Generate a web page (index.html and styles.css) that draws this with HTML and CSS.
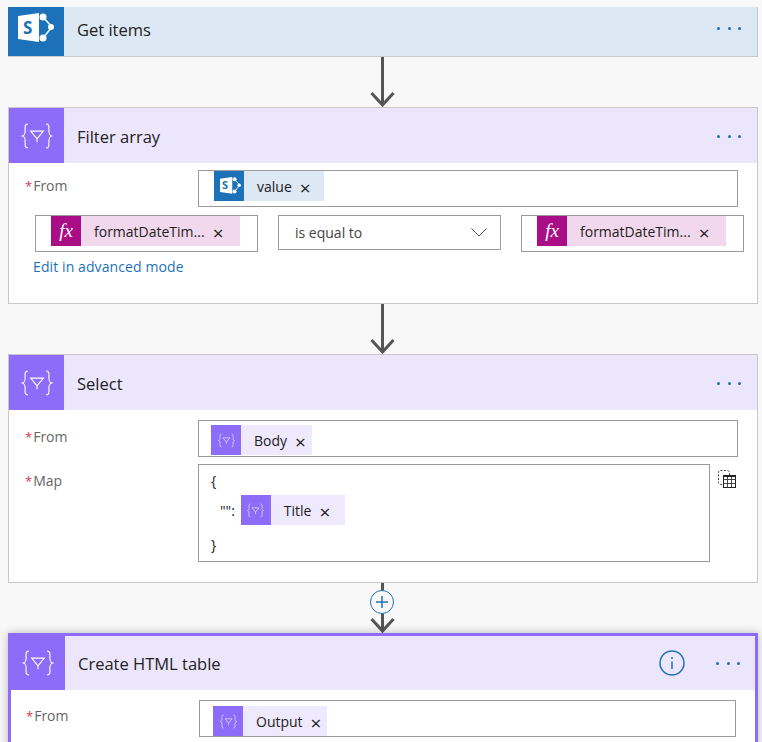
FILE: index.html
```html
<!DOCTYPE html>
<html lang="en">
	<head>
		<title>Flow</title>
		<meta charset="utf-8">
		<link rel="stylesheet" href="styles.css">
	</head>

	<body>
		<svg class="defs" width="0" height="0">
			<symbol id="sp" viewBox="0 0 36 31">
				<path d="M25 4 34 14 25 25" fill="none" stroke="#fff" stroke-width="1.500"/>
				<circle cx="25" cy="4" r="3.500" fill="#fff"/>
				<circle cx="33" cy="14" r="3" fill="#fff"/>
				<circle cx="25" cy="25" r="3.500" fill="#fff"/>
				<polygon points="0,3 21,0 21,29 0,26" fill="#fff"/>
			</symbol>
			<symbol id="filter" viewBox="0 0 30 30">
				<g fill="none" stroke="#fff" stroke-width=".8">
					<path d="M8.500 6.500C6 6.500 6.500 8.500 6.500 11.500 6.500 14 6 14.500 4.500 15 6 15.500 6.500 16 6.500 18.500 6.500 21.500 6 23.500 8.500 23.500"/>
					<path d="M21.500 6.500C24 6.500 23.500 8.500 23.500 11.500 23.500 14 24 14.500 25.500 15 24 15.500 23.500 16 23.500 18.500 23.500 21.500 24 23.500 21.500 23.500"/>
					<path d="M10.500 11.500H19.500L15 17ZM15 17V19.500"/>
				</g>
			</symbol>
		</svg>

		<div class="flow">
			<div class="card card-sp">
				<div class="head head-first">
					<div class="tile tile-blue">
						<svg class="tile-sp" viewBox="0 0 36 31"><use href="#sp"/></svg>
						<span class="tile-s">S</span>
					</div>
					<div class="title">Get items</div>
					<div class="dots"><i></i><i></i><i></i></div>
				</div>
			</div>

			<div class="link-arrow">
				<svg width="50" height="50"><path d="M24.500 0V48M13.500 36 24.500 48 35.500 36" fill="none" stroke="#555" stroke-width="3"/></svg>
			</div>

			<div class="card card-filter">
				<div class="head">
					<div class="tile"><svg class="tile-svg" viewBox="0 0 30 30"><use href="#filter"/></svg></div>
					<div class="title">Filter array</div>
					<div class="dots"><i></i><i></i><i></i></div>
				</div>
				<div class="body body-filter">
					<div class="row">
						<div class="label"><b>*</b>From</div>
						<div class="input input-wide input-top">
							<div class="chip chip-sp">
								<div class="chip-icon chip-icon-blue">
									<svg class="chip-sp-svg" viewBox="0 0 36 31"><use href="#sp"/></svg>
									<span class="chip-s">S</span>
								</div>
								<span class="chip-text">value</span><span class="x">×</span>
							</div>
						</div>
					</div>
					<div class="cond">
						<div class="input input-cond input-top">
							<div class="chip chip-fx">
								<div class="chip-icon chip-icon-fx">fx</div>
								<span class="chip-text">formatDateTim...</span><span class="x">×</span>
							</div>
						</div>
						<div class="input input-cond input-select">
							<span>is equal to</span>
							<svg width="16" height="9"><path d="M.5 .5 8 8 15.500 .5" fill="none" stroke="#555"/></svg>
						</div>
						<div class="input input-cond input-top">
							<div class="chip chip-fx">
								<div class="chip-icon chip-icon-fx">fx</div>
								<span class="chip-text">formatDateTim...</span><span class="x">×</span>
							</div>
						</div>
					</div>
					<a class="advanced">Edit in advanced mode</a>
				</div>
			</div>

			<div class="link-arrow">
				<svg width="50" height="50"><path d="M24.500 0V48M13.500 36 24.500 48 35.500 36" fill="none" stroke="#555" stroke-width="3"/></svg>
			</div>

			<div class="card card-select">
				<div class="head">
					<div class="tile"><svg class="tile-svg" viewBox="0 0 30 30"><use href="#filter"/></svg></div>
					<div class="title">Select</div>
					<div class="dots"><i></i><i></i><i></i></div>
				</div>
				<div class="body body-select">
					<div class="row">
						<div class="label"><b>*</b>From</div>
						<div class="input input-wide">
							<div class="chip">
								<div class="chip-icon"><svg viewBox="0 0 30 30"><use href="#filter"/></svg></div>
								<span class="chip-text">Body</span><span class="x">×</span>
							</div>
						</div>
					</div>
					<div class="row">
						<div class="label"><b>*</b>Map</div>
						<div class="input input-map">
							<div class="map-line">{</div>
							<div class="map-entry">
								<span class="map-key">"":</span>
								<div class="chip chip-title">
									<div class="chip-icon"><svg viewBox="0 0 30 30"><use href="#filter"/></svg></div>
									<span class="chip-text">Title</span><span class="x">×</span>
								</div>
							</div>
							<div class="map-line map-end">}</div>
						</div>
						<svg class="paste" width="18" height="18" viewBox="0 0 18 18">
							<rect x=".5" y=".5" width="11" height="14" rx="2" fill="none" stroke="#444" stroke-dasharray="2 1.500"/>
							<rect x="5.500" y="5.500" width="12" height="12" fill="#fff" stroke="#222"/>
							<path d="M5.500 9.500H17.500M5.500 13.500H17.500M9.500 5.500V17.500M13.500 5.500V17.500" stroke="#444"/>
							<path d="M5 6H18" stroke="#222" stroke-width="2"/>
						</svg>
					</div>
				</div>
			</div>

			<div class="link-arrow">
				<svg width="50" height="50"><path d="M24.500 0V48M13.500 36 24.500 48 35.500 36" fill="none" stroke="#555" stroke-width="3"/></svg>
				<div class="insert">
					<svg width="24" height="24"><path d="M12 6V18M6 12H18" stroke="#1f71b8" stroke-width="1.500"/></svg>
				</div>
			</div>

			<div class="card card-active">
				<div class="head">
					<div class="tile"><svg class="tile-svg" viewBox="0 0 30 30"><use href="#filter"/></svg></div>
					<div class="title">Create HTML table</div>
					<svg class="info" width="26" height="26">
						<circle cx="13" cy="13" r="12" fill="none" stroke="#1f71b8" stroke-width="1.500"/>
						<path d="M13 11.500V19" stroke="#1f71b8" stroke-width="1.500"/>
						<circle cx="13" cy="8" r="1" fill="#1f71b8"/>
					</svg>
					<div class="dots"><i></i><i></i><i></i></div>
				</div>
				<div class="body body-active">
					<div class="row">
						<div class="label"><b>*</b>From</div>
						<div class="input input-active">
							<div class="chip">
								<div class="chip-icon"><svg viewBox="0 0 30 30"><use href="#filter"/></svg></div>
								<span class="chip-text">Output</span><span class="x">×</span>
							</div>
						</div>
					</div>
				</div>
			</div>
		</div>
	</body>
</html>
```

FILE: styles.css
```css
body {
	background-color: #f8f8f8;
	color: #222;
	margin: 0px;
	overflow: hidden;
	height: 742px;
	font-family: "Open Sans", "Noto Sans", sans-serif;
	font-size: 14px;
}

.defs {
	position: absolute;
}

.flow {
	width: 750px;
	padding: 7px 0 0 8px;
}

.card {
	background-color: #fff;
	border: 1px solid #c8c8c8;
	box-sizing: border-box;
}

.card-sp {
	border-width: 0 1px 1px 0;
	background-color: #dce8f4;
	height: 50px;
}

.card-active {
	border: 3px solid #8c6cf8;
	box-shadow: 0 0 9px rgba(0, 0, 0, 0.25);
	position: relative;
}

.head {
	display: flex;
	align-items: center;
	height: 55px;
	background-color: #ece6fc;
}

.head-first {
	height: 49px;
	background-color: #dce8f4;
}

.card-active .head {
	height: 54px;
}

.tile {
	width: 55px;
	height: 100%;
	flex: none;
	background-color: #8c6cf8;
	display: flex;
	align-items: center;
	justify-content: center;
	position: relative;
}

.card-active .tile {
	width: 54px;
}

.tile-blue {
	width: 56px;
	background-color: #1d71b8;
}

.tile-svg {
	width: 42px;
	height: 42px;
}

.tile-sp {
	width: 36px;
	height: 31px;
	margin-bottom: 6px;
}

.tile-s {
	position: absolute;
	left: 15px;
	top: 9px;
	font-size: 17px;
	font-weight: 700;
	line-height: 24px;
	color: #1d71b8;
}

.title {
	margin: 2px 0 0 13px;
	font-size: 16.500px;
	flex: 1;
	color: #222;
}

.head-first .title {
	margin: 0 0 4px 13px;
}

.card-active .title {
	margin-top: 0;
}

.dots {
	display: flex;
	gap: 7.500px;
	margin: 2px 16px 0 0;
}

.head-first .dots {
	margin: 0 16px 6px 0;
}

.card-active .dots {
	margin: 0 15px 0 0;
}

.dots i {
	width: 3px;
	height: 3px;
	border-radius: 50%;
	background-color: #1d71b8;
}

.info {
	margin-right: 31px;
}

.link-arrow {
	height: 50px;
	padding-left: 350px;
	position: relative;
}

.link-arrow svg {
	display: block;
}

.insert {
	position: absolute;
	left: 362px;
	top: 7px;
	width: 24px;
	height: 24px;
	border: 1px solid #1d71b8;
	border-radius: 50%;
	box-sizing: border-box;
	background-color: #f8f8f8;
}

.insert svg {
	margin: -1px;
}

.body {
	padding-left: 16px;
}

.body-filter {
	height: 140px;
	padding-top: 7px;
	box-sizing: border-box;
}

.body-select {
	height: 172px;
	padding-top: 10px;
	box-sizing: border-box;
}

.body-select .row + .row {
	margin-top: 7px;
}

.body-select .label {
	line-height: 34px;
}

.body-active {
	padding-top: 10px;
	padding-left: 15px;
	height: 60px;
	box-sizing: border-box;
}

.row {
	display: flex;
	align-items: flex-start;
}

.label {
	width: 173px;
	flex: none;
	color: #666;
	line-height: 32px;
}

.label b {
	color: #d8334a;
	font-weight: 400;
	font-size: 13px;
	margin-right: 1px;
}

.input {
	border: 1px solid #9a9a9a;
	box-sizing: border-box;
	background-color: #fff;
	height: 37px;
	padding: 4px 0 0 12px;
}

.input-wide {
	width: 540px;
}

.input-top {
	padding-top: 0;
	padding-left: 15px;
}

.input-map {
	width: 512px;
	height: 98px;
	padding-top: 6px;
}

.input-active {
	width: 537px;
	padding-left: 13px;
	padding-top: 5px;
}

.cond {
	display: flex;
	gap: 20px;
	margin-top: 8px;
	margin-left: 10px;
}

.input-cond {
	width: 223px;
}

.input-select {
	height: 35px;
	padding: 0 13px 0 16px;
	display: flex;
	align-items: center;
	justify-content: space-between;
	color: #444;
}

.chip {
	display: inline-flex;
	align-items: center;
	height: 30px;
	background-color: #eee9fc;
}

.chip-sp {
	background-color: #dce8f4;
	padding-right: 7px;
}

.chip-fx {
	background-color: #f2d8ec;
	padding-right: 10px;
}

.chip-title {
	padding-right: 9px;
}

.chip-icon {
	width: 30px;
	height: 30px;
	background-color: #8c6cf8;
	flex: none;
	display: flex;
	align-items: center;
	justify-content: center;
	position: relative;
}

.chip-icon svg {
	display: block;
	width: 23px;
	height: 23px;
	opacity: 0.9;
}

.chip-icon .chip-sp-svg {
	width: 21px;
	height: 18px;
	margin-left: 2px;
	opacity: 1;
}

.chip-icon-blue {
	background-color: #1d71b8;
}

.chip-s {
	position: absolute;
	left: 8px;
	top: 3px;
	font-size: 11px;
	line-height: 22px;
	font-weight: 700;
	color: #1d71b8;
}

.chip-icon-fx {
	background-color: #aa0e87;
	color: #fff;
	font-family: "Liberation Serif", serif;
	font-style: italic;
	font-size: 19px;
	line-height: 30px;
	text-align: center;
}

.chip-text {
	margin-left: 13px;
	color: #222;
}

.x {
	margin: 4px 6px 0 8px;
	font-size: 19px;
	line-height: 20px;
	color: #222;
}

.map-line {
	line-height: 20px;
	height: 20px;
}

.map-entry {
	display: flex;
	align-items: center;
	margin-top: 4px;
}

.map-key {
	margin: 0 6px 0 9px;
}

.map-end {
	margin-top: 10px;
}

.paste {
	margin: 6px 0 0 8px;
}

.advanced {
	display: block;
	margin: 5px 0 0 8px;
	line-height: 20px;
	letter-spacing: 0.1px;
	color: #1d71b8;
}
```
